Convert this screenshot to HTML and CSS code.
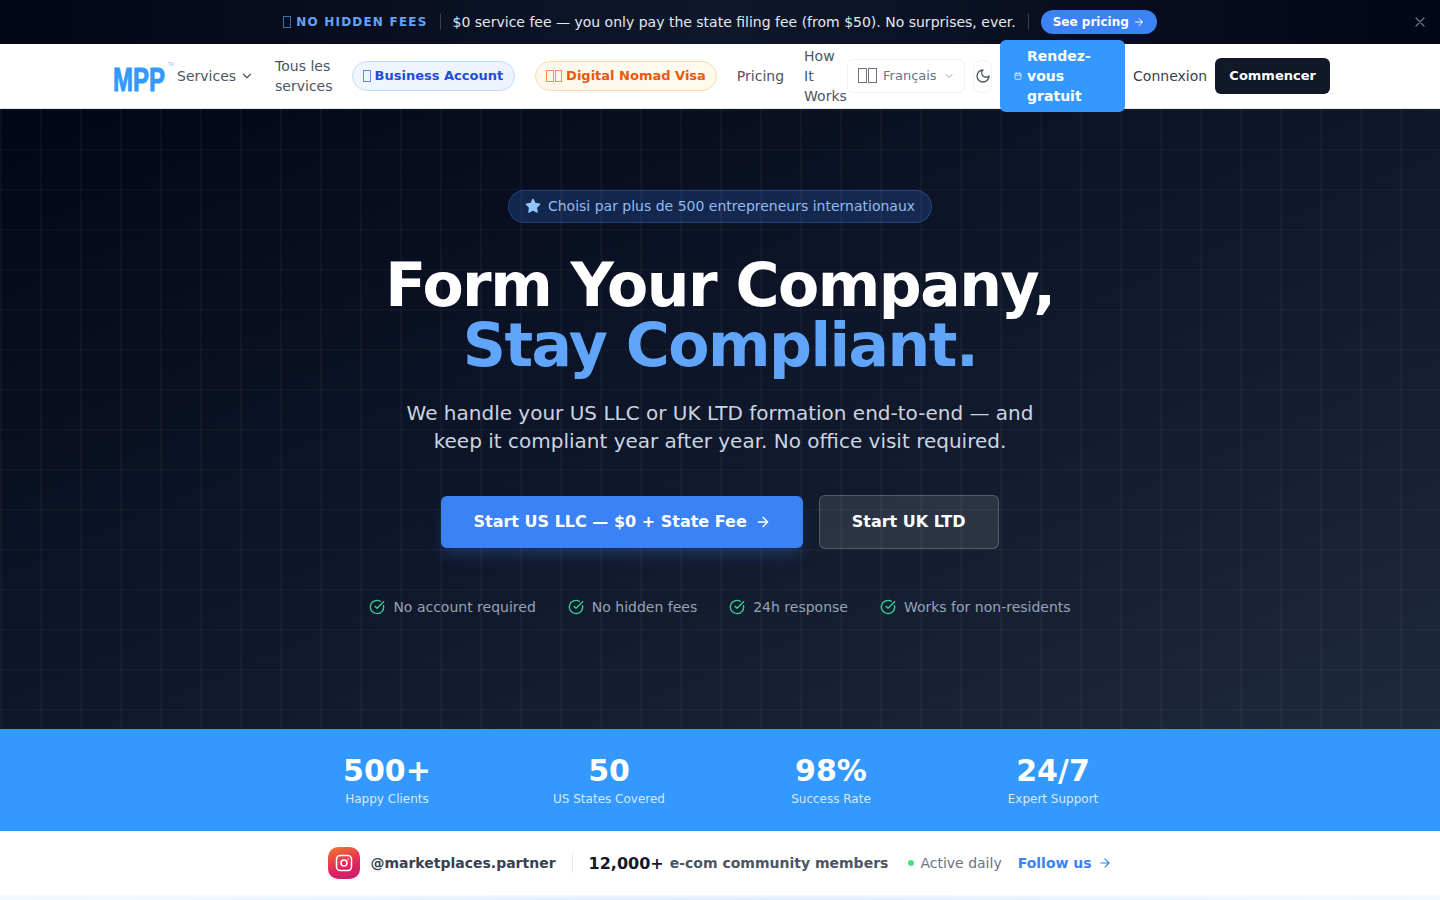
FILE: index.html
```html
<!DOCTYPE html>
<html lang="fr">
<head>
    <meta charset="UTF-8">
    <meta name="viewport" content="width=device-width, initial-scale=1.0">
    <title>MPP</title>
    <link rel="stylesheet" href="styles.css">
</head>
<body>
    <!-- Bandeau promo -->
    <div class="promo">
        <span class="promo-tag"><i class="tofu"></i>NO HIDDEN FEES</span>
        <span class="promo-sep"></span>
        <span class="promo-text">$0 service fee — you only pay the state filing fee (from $50). No surprises, ever.</span>
        <span class="promo-sep"></span>
        <a class="promo-btn" href="#">See pricing
            <svg class="icon" width="12" height="12" viewBox="0 0 24 24"><path d="M5 12h14M12 5l7 7-7 7"/></svg>
        </a>
        <svg class="icon promo-close" width="16" height="16" viewBox="0 0 24 24"><path d="M18 6 6 18M6 6l12 12"/></svg>
    </div>

    <!-- Navigation -->
    <header class="nav">
        <a class="logo" href="#">
            <svg width="64" height="46" viewBox="0 0 89.400 46" preserveAspectRatio="none">
                <text class="logo-text" x="1.400" y="38">MPP</text>
                <text class="logo-tm" x="78" y="13">TM</text>
            </svg>
        </a>
        <a class="nav-link link-services" href="#">Services
            <svg class="icon" width="14" height="14" viewBox="0 0 24 24"><path d="m6 9 6 6 6-6"/></svg>
        </a>
        <a class="nav-link link-all" href="#">Tous les services</a>
        <a class="pill pill-blue" href="#"><i class="tofu"></i>Business Account</a>
        <a class="pill pill-orange" href="#"><i class="tofu"></i><i class="tofu"></i>Digital Nomad Visa</a>
        <a class="nav-link" href="#">Pricing</a>
        <a class="nav-link link-how" href="#">How It Works</a>
        <button class="lang"><span class="lang-flag"><i class="tofu"></i><i class="tofu"></i></span>Français
            <svg class="icon" width="12" height="12" viewBox="0 0 24 24"><path d="m6 9 6 6 6-6"/></svg>
        </button>
        <button class="theme">
            <svg class="icon" width="16" height="16" viewBox="0 0 24 24"><path d="M12 3a6 6 0 0 0 9 9 9 9 0 1 1-9-9Z"/></svg>
        </button>
        <a class="rdv" href="#">
            <svg class="icon" width="8" height="8" viewBox="0 0 24 24"><path d="M8 2v4M16 2v4M3 10h18"/><rect x="3" y="4" width="18" height="18" rx="2"/></svg>
            <span class="rdv-text">Rendez-vous gratuit</span>
        </a>
        <a class="nav-link link-login" href="#">Connexion</a>
        <a class="start" href="#">Commencer</a>
    </header>

    <!-- Hero -->
    <section class="hero">
        <div class="hero-badge">
            <svg width="16" height="16" viewBox="0 0 24 24"><path class="star" d="M12 2l3.100 6.300 6.900 1-5 4.900 1.200 6.900-6.200-3.300-6.200 3.300L7 14.200 2 9.300l6.900-1z"/></svg>
            Choisi par plus de 500 entrepreneurs internationaux
        </div>
        <h1>Form Your Company,<br><span class="accent">Stay Compliant.</span></h1>
        <p class="hero-sub">We handle your US LLC or UK LTD formation end-to-end — and keep it compliant year after year. No office visit required.</p>
        <div class="hero-actions">
            <a class="btn btn-primary" href="#">Start US LLC — $0 + State Fee
                <svg class="icon" width="16" height="16" viewBox="0 0 24 24"><path d="M5 12h14M12 5l7 7-7 7"/></svg>
            </a>
            <a class="btn btn-ghost" href="#">Start UK LTD</a>
        </div>
        <ul class="checks">
            <li><svg class="icon" width="16" height="16" viewBox="0 0 24 24"><path d="M21.800 10A10 10 0 1 1 17 3.340"/><path d="m9 11 3 3L22 4"/></svg>No account required</li>
            <li><svg class="icon" width="16" height="16" viewBox="0 0 24 24"><path d="M21.800 10A10 10 0 1 1 17 3.340"/><path d="m9 11 3 3L22 4"/></svg>No hidden fees</li>
            <li><svg class="icon" width="16" height="16" viewBox="0 0 24 24"><path d="M21.800 10A10 10 0 1 1 17 3.340"/><path d="m9 11 3 3L22 4"/></svg>24h response</li>
            <li><svg class="icon" width="16" height="16" viewBox="0 0 24 24"><path d="M21.800 10A10 10 0 1 1 17 3.340"/><path d="m9 11 3 3L22 4"/></svg>Works for non-residents</li>
        </ul>
    </section>

    <!-- Chiffres -->
    <section class="stats">
        <div class="stat"><strong>500+</strong><span>Happy Clients</span></div>
        <div class="stat"><strong>50</strong><span>US States Covered</span></div>
        <div class="stat"><strong>98%</strong><span>Success Rate</span></div>
        <div class="stat"><strong>24/7</strong><span>Expert Support</span></div>
    </section>

    <!-- Communauté -->
    <section class="community">
        <span class="ig">
            <svg class="icon" width="18" height="18" viewBox="0 0 24 24"><rect x="2" y="2" width="20" height="20" rx="5"/><circle cx="12" cy="12" r="4"/><path d="M17.500 6.500h.01"/></svg>
        </span>
        <span class="ig-handle">@marketplaces.partner</span>
        <span class="community-sep"></span>
        <strong class="ig-count">12,000+</strong>
        <span class="ig-label">e-com community members</span>
        <span class="ig-active"><i class="dot"></i>Active daily</span>
        <a class="ig-follow" href="#">Follow us
            <svg class="icon" width="14" height="14" viewBox="0 0 24 24"><path d="M5 12h14M12 5l7 7-7 7"/></svg>
        </a>
    </section>
    <div class="next-section"></div>
</body>
</html>
```

FILE: styles.css
```css
* {
    box-sizing: border-box;
}

html, body {
    margin: 0;
    height: 900px;
    overflow: hidden;
}

body {
    font-family: "DejaVu Sans", sans-serif;
    font-size: 14px;
    background-color: #fff;
    color: #1f2937;
}

a {
    color: inherit;
    text-decoration: none;
}

.icon {
    fill: none;
    stroke: currentColor;
    stroke-width: 2;
    stroke-linecap: round;
    stroke-linejoin: round;
    flex-shrink: 0;
}

/* the missing-glyph boxes of the emoji */
.tofu {
    display: inline-block;
    width: 7.500px;
    height: 12px;
    border: 1px solid currentColor;
    opacity: 0.65;
    flex-shrink: 0;
}

.tofu + .tofu {
    margin-left: 1px;
}

/* Bandeau promo */
.promo {
    position: relative;
    height: 44px;
    display: flex;
    align-items: center;
    justify-content: center;
    gap: 12px;
    background: linear-gradient(90deg, #020617, #0f172a 50%, #020617);
    color: #e2e8f0;
    font-size: 14px;
}

.promo-tag {
    display: flex;
    align-items: center;
    color: #60a5fa;
    font-size: 12px;
    font-weight: 700;
    letter-spacing: 1.2px;
    padding-bottom: 1px;
}

.promo-tag .tofu {
    width: 8px;
    margin-right: 5px;
}

.promo-sep {
    width: 1px;
    height: 16px;
    background-color: rgba(255, 255, 255, 0.2);
}

.promo-btn {
    display: flex;
    align-items: center;
    gap: 4px;
    height: 24px;
    padding: 0 12px;
    border-radius: 12px;
    background-color: #3b82f6;
    color: #fff;
    font-size: 12px;
    font-weight: 700;
}

.promo-close {
    position: absolute;
    right: 12px;
    top: 14px;
    color: #64748b;
}

/* Navigation */
.nav {
    position: relative;
    z-index: 2;
    height: 65px;
    display: flex;
    align-items: center;
    padding-left: 112px;
    background-color: #fff;
    border-bottom: 1px solid #e5e7eb;
}

.logo {
    display: block;
    width: 64px;
    height: 46px;
    margin-right: 1px;
}

.logo-text {
    font-family: "Liberation Sans", sans-serif;
    font-size: 33.500px;
    font-weight: 700;
    fill: #3399ff;
    stroke: #3399ff;
    stroke-width: 1;
}

.logo-tm {
    font-family: "Liberation Sans", sans-serif;
    font-size: 5.500px;
    fill: #7dbdff;
}

.nav-link {
    color: #4b5563;
    line-height: 20px;
    flex-shrink: 0;
}

.link-services {
    display: flex;
    align-items: center;
    gap: 4px;
    margin-right: 21px;
}

.link-all {
    width: 57px;
    margin-right: 20px;
}

.link-how {
    width: 43px;
}

.pill {
    height: 30px;
    display: flex;
    align-items: center;
    padding: 0 10px 1px 10px;
    border-radius: 15px;
    font-size: 13px;
    font-weight: 700;
    margin-right: 20px;
    white-space: nowrap;
    flex-shrink: 0;
}

.pill .tofu:last-of-type {
    margin-right: 4px;
}

.pill-blue {
    padding-right: 11px;
    background: linear-gradient(90deg, #eff6ff, #eef2ff);
    border: 1px solid #bfdbfe;
    color: #1d4ed8;
}

.pill-orange {
    background: linear-gradient(90deg, #fff7ed, #fffbeb);
    border: 1px solid #fed7aa;
    color: #ea580c;
}

.nav-link + .link-how {
    margin-left: 20px;
}

.lang {
    width: 118px;
    height: 34px;
    display: flex;
    align-items: center;
    gap: 6px;
    padding: 0 10px 1px;
    border: 1px solid #f0f1f3;
    border-radius: 6px;
    background-color: #fff;
    color: #6b7280;
    font-family: inherit;
    font-size: 13px;
    flex-shrink: 0;
}

.lang .icon {
    color: #9ca3af;
}

.lang-flag {
    display: flex;
    color: #1f2937;
}

.lang-flag .tofu {
    width: 9px;
    height: 15px;
}

.theme {
    width: 19px;
    height: 33px;
    margin: 0 8px;
    padding: 0;
    display: flex;
    align-items: center;
    justify-content: center;
    border: 1px solid #f0f1f3;
    border-radius: 8px;
    background-color: #fff;
    color: #4b5563;
    flex-shrink: 0;
}

.rdv {
    width: 125px;
    height: 72px;
    display: flex;
    align-items: center;
    gap: 5px;
    padding: 0 14px;
    border-radius: 6px;
    background-color: #3399ff;
    color: #fff;
    font-weight: 700;
    line-height: 20px;
    flex-shrink: 0;
}

.rdv-text {
    width: 70px;
}

.link-login {
    margin: 0 8px;
    color: #374151;
}

.start {
    width: 115px;
    height: 36px;
    display: flex;
    align-items: center;
    justify-content: center;
    padding-bottom: 1px;
    border-radius: 6px;
    background-color: #111827;
    color: #fff;
    font-size: 13px;
    font-weight: 700;
    flex-shrink: 0;
}

/* Hero */
.hero {
    height: 620px;
    padding-top: 81px;
    display: flex;
    flex-direction: column;
    align-items: center;
    color: #fff;
    background-image:
        linear-gradient(rgba(255, 255, 255, 0.025) 2px, transparent 2px),
        linear-gradient(90deg, rgba(255, 255, 255, 0.03) 2px, transparent 2px),
        linear-gradient(to bottom right, #020617 0%, #0f172a 50%, #1e293b 100%);
    background-size: 40px 40px, 40px 40px, auto;
}

.hero-badge {
    height: 33px;
    display: flex;
    align-items: center;
    gap: 7px;
    padding: 0 16px 1px;
    border: 1px solid rgba(59, 130, 246, 0.3);
    border-radius: 17px;
    background-color: rgba(59, 130, 246, 0.2);
    color: #93bbef;
    font-size: 14px;
}

.star {
    fill: #93c5fd;
    stroke: #93c5fd;
    stroke-width: 2;
    stroke-linejoin: round;
}

h1 {
    margin: 32px 0 0;
    font-size: 60px;
    line-height: 60px;
    font-weight: 700;
    letter-spacing: -1.5px;
    text-align: center;
}

.accent {
    color: #60a5fa;
}

.hero-sub {
    width: 672px;
    margin: 24px 0 0;
    font-size: 20px;
    line-height: 28px;
    text-align: center;
    color: #cbd5e1;
}

.hero-actions {
    display: flex;
    align-items: center;
    gap: 16px;
    margin-top: 40px;
}

.btn {
    display: flex;
    align-items: center;
    gap: 8px;
    padding: 0 32px 1px;
    border-radius: 6px;
    font-size: 16px;
    font-weight: 700;
}

.btn-primary {
    height: 52px;
    background-color: #3b82f6;
    box-shadow: 0 10px 15px -3px rgba(59, 130, 246, 0.25);
}

.btn-ghost {
    height: 54px;
    border: 1px solid rgba(255, 255, 255, 0.2);
    background-color: rgba(255, 255, 255, 0.1);
}

.checks {
    list-style: none;
    display: flex;
    gap: 32px;
    margin: 50px 0 0;
    padding: 0;
    color: #94a3b8;
}

.checks li {
    display: flex;
    align-items: center;
    gap: 8px;
}

.checks .icon {
    color: #34d399;
}

/* Chiffres */
.stats {
    height: 102px;
    display: grid;
    grid-template-columns: repeat(4, 222px);
    justify-content: center;
    padding-top: 24px;
    background-color: #3399ff;
    color: #fff;
    text-align: center;
}

.stat strong {
    display: block;
    font-size: 30px;
    line-height: 36px;
}

.stat span {
    display: block;
    font-size: 12px;
    line-height: 16px;
    margin-top: 2px;
    color: rgba(255, 255, 255, 0.8);
}

/* Communauté */
.community {
    height: 64px;
    display: flex;
    align-items: center;
    justify-content: center;
    background-color: #fff;
    color: #4b5563;
}

.ig {
    width: 32px;
    height: 32px;
    display: flex;
    align-items: center;
    justify-content: center;
    border-radius: 10px;
    background: linear-gradient(160deg, #f4792b, #e0245e 60%, #c81e6e);
    color: #fff;
}

.ig-handle {
    margin-left: 10px;
    font-weight: 700;
    color: #374151;
}

.community-sep {
    width: 1px;
    height: 20px;
    margin: 0 16px;
    background-color: #e5e7eb;
}

.ig-count {
    font-size: 16px;
    color: #111827;
}

.ig-label {
    margin-left: 6px;
    font-weight: 700;
}

.ig-active {
    display: flex;
    align-items: center;
    gap: 6px;
    margin-left: 20px;
    color: #6b7280;
}

.dot {
    width: 6px;
    height: 6px;
    border-radius: 50%;
    background-color: #4ade80;
}

.ig-follow {
    display: flex;
    align-items: center;
    gap: 6px;
    margin-left: 16px;
    font-weight: 700;
    color: #3b82f6;
}

.next-section {
    height: 5px;
    background: radial-gradient(ellipse at 50% 100%, #dbeafe, #f4f9ff 70%);
}
```
